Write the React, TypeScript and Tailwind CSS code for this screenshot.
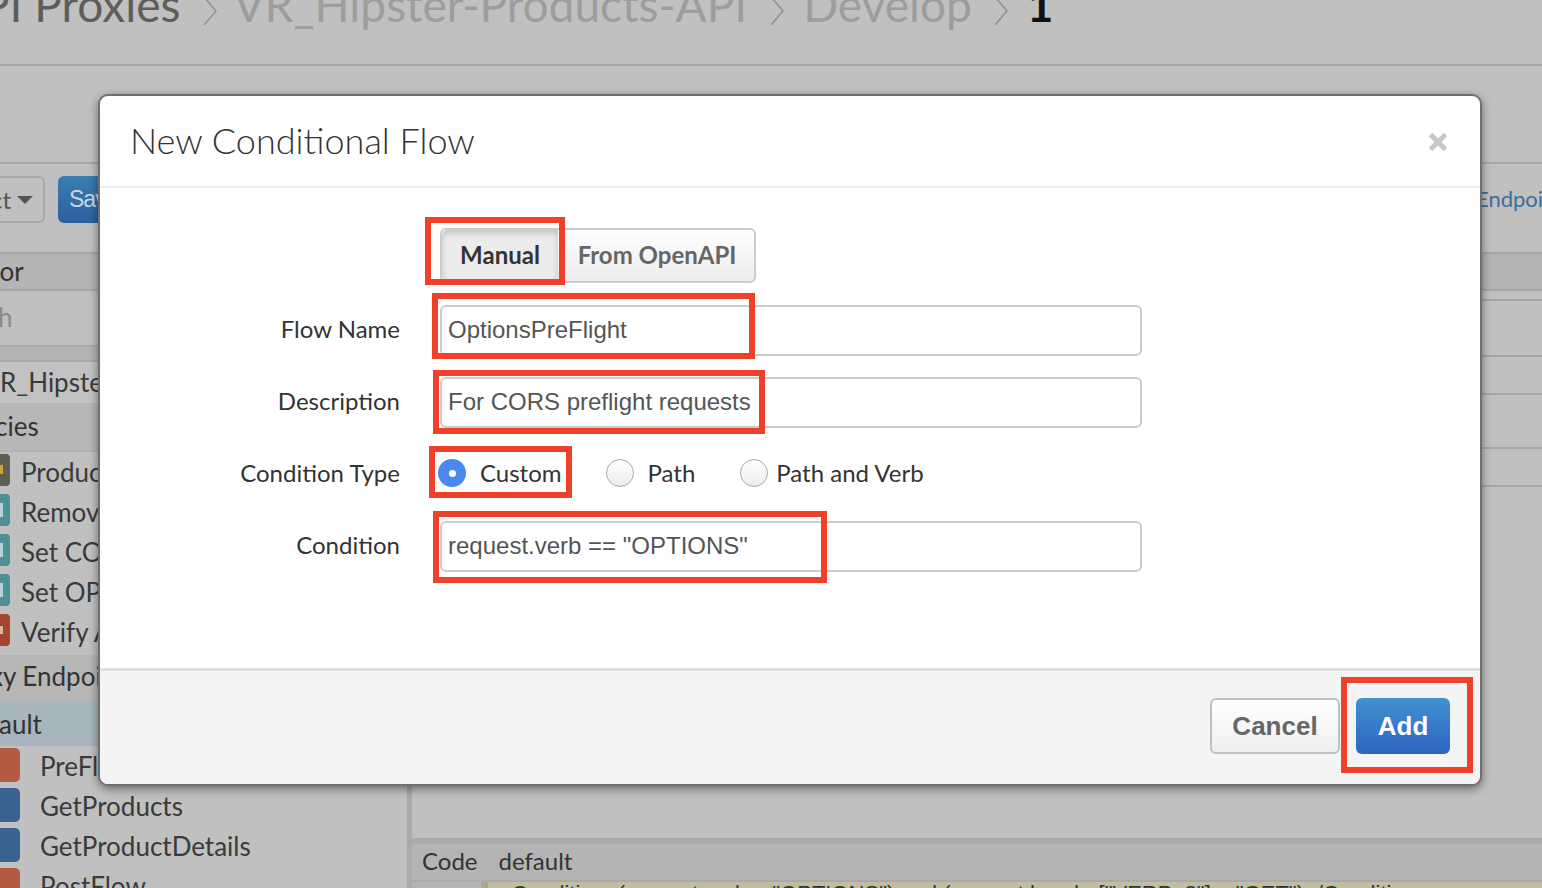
import React from "react";

const lato = "font-['Lato','Noto_Sans',sans-serif]";
const helv = "font-['Liberation_Sans',Arial,sans-serif]";

function Chevron({ className }: { className: string }) {
  return (
    <svg width="14" height="30" viewBox="0 0 14 30" className={`shrink-0 mt-[19px] ${className}`}>
      <path d="M1 1 L13 15 L1 29" fill="none" stroke="#8f8f8f" strokeWidth="1.4" />
    </svg>
  );
}

function SideRow({ color, text, mark, markH }: { color: string; text: string; mark: string; markH: string }) {
  return (
    <div className="h-10 flex items-center -ml-[10px]">
      <div className={`w-5 h-[32px] -mt-[5px] rounded-[4px] flex items-center justify-end pr-[7px] ${color}`}>
        <div className={`w-[3px] ${markH} ${mark}`} />
      </div>
      <span className="ml-[11px] text-[#3a3a3a]">{text}</span>
    </div>
  );
}

function FlowRow({ color, text }: { color: string; text: string }) {
  return (
    <div className="h-10 flex items-center">
      <div className={`w-5 h-[34px] -mt-[2px] rounded-r-[5px] ${color}`} />
      <span className="ml-5 text-[#3a3a3a]">{text}</span>
    </div>
  );
}

function Mark({ className }: { className: string }) {
  return <div className={`absolute border-[6px] border-[#ee4127] ${className}`} />;
}

function Field({ label, value }: { label: string; value: string }) {
  return (
    <div className="flex items-center h-[52px] mb-5">
      <div className={`w-[300px] text-right text-[24px] text-[#333] ${lato}`}>{label}</div>
      <div className={`ml-10 mt-[3px] w-[702px] h-[51px] border-2 border-[#cccccc] rounded-[6px] bg-white px-[6px] pb-[2px] flex items-center text-[24px] text-[#555] ${helv}`}>
        {value}
      </div>
    </div>
  );
}

function Radio({ checked }: { checked?: boolean }) {
  return checked ? (
    <div className="w-7 h-7 rounded-full bg-[#4b88ee] flex items-center justify-center">
      <div className="w-[7px] h-[7px] rounded-full bg-white" />
    </div>
  ) : (
    <div className="w-7 h-7 rounded-full border border-[#a9a9a9] bg-gradient-to-b from-white to-[#ececec]" />
  );
}

export default function App() {
  return (
    <div className={`relative w-[1542px] h-[888px] overflow-hidden bg-[#c0c0c0] ${lato} text-[26px]`}>
      {/* Page behind the dialog */}
      <div className="h-[66px] border-b-2 border-[#a6a6a6] overflow-hidden">
        <div className="flex items-start -mt-[23px] -ml-[18px] text-[46px] leading-[56px] whitespace-nowrap">
          <span className="text-[#5d5d5d]">PI Proxies</span>
          <Chevron className="ml-[23px] mr-[16px]" />
          <span className="text-[#9d9d9d]">VR_Hipster-Products-API</span>
          <Chevron className="ml-[23px] mr-[19px]" />
          <span className="text-[#9d9d9d]">Develop</span>
          <Chevron className="ml-[22px] mr-[19px]" />
          <span className="text-[#111] font-bold">1</span>
        </div>
      </div>
      <div className="h-[96px]" />
      <div className="h-[90px] border-t-2 border-[#a6a6a6] flex items-start justify-between pt-[12px]">
        <div className="flex items-center gap-[13px]">
          <div className="w-[45px] h-[47px] border-2 border-l-0 border-[#a9a9a9] rounded-r-[6px] flex items-center justify-end pr-[10px] gap-[6px] text-[24px] text-[#555] overflow-hidden">
            <span>ct</span>
            <span className="w-0 h-0 border-x-[8px] border-x-transparent border-t-[8px] border-t-[#555] shrink-0" />
          </div>
          <div className={`w-20 h-[47px] rounded-[6px] bg-gradient-to-b from-[#3a7eb0] to-[#2c5f9e] text-[#c9d6e2] pl-[11px] flex items-center text-[23px] tracking-[-1px] ${helv}`}>
            Save
          </div>
        </div>
        <div className="w-[66px] overflow-hidden whitespace-nowrap text-[22px] leading-[46px] text-[#3a6f9a]">Endpoints</div>
      </div>
      <div className="flex h-[636px]">
        <div className="w-[407px] shrink-0 overflow-hidden">
          <div className="h-[39px] border-y-2 border-[#a6a6a6] bg-[#b4b4b4] flex items-center -ml-[45px] text-[#333]">Editor</div>
          <div className="h-[54px] pb-[2px] flex items-center -ml-[2px] text-[#8a8a8a]">h</div>
          <div className="h-[17px] border-y-2 border-[#a9a9a9] bg-[#b4b4b4]" />
          <div className="h-[41px] bg-[#c2c2c2] flex items-center text-[#3a3a3a]">R_Hipster</div>
          <div className="h-[49px] border-b-2 border-[#b0b0b0] bg-[#b7b7b7] flex items-center -ml-[5px] text-[#333]">cies</div>
          <SideRow color="bg-[#5d5d52]" text="Product" mark="bg-[#c2a83a]" markH="h-[9px]" />
          <SideRow color="bg-[#4f8f96]" text="Remove" mark="bg-[#b7d3d6]" markH="h-[14px]" />
          <SideRow color="bg-[#4f8f96]" text="Set CORS" mark="bg-[#b7d3d6]" markH="h-[14px]" />
          <SideRow color="bg-[#4f8f96]" text="Set OPTIONS" mark="bg-[#b7d3d6]" markH="h-[14px]" />
          <SideRow color="bg-[#a8452d]" text="Verify API" mark="bg-[#d9b5a8]" markH="h-[8px]" />
          <div className="h-[46px] mt-[3px] pb-[3px] bg-[#b7b7b7] flex items-center -ml-[10px] text-[#333]">xy Endpoints</div>
          <div className="h-[45px] pt-[2px] bg-[#a7b5bf] flex items-center -ml-[1px] text-[#333]">ault</div>
          <FlowRow color="bg-[#b35b42]" text="PreFlow" />
          <FlowRow color="bg-[#38628f]" text="GetProducts" />
          <FlowRow color="bg-[#38628f]" text="GetProductDetails" />
          <FlowRow color="bg-[#b35b42]" text="PostFlow" />
        </div>
        <div className="w-[5px] shrink-0 bg-[#aaaaaa]" />
        <div className="flex-1 min-w-0 flex flex-col">
          <div className="h-[39px] shrink-0 border-y-2 border-[#a6a6a6] bg-[#b4b4b4]" />
          <div className="h-[8px] shrink-0" />
          <div className="h-[56px] shrink-0 border-t-2 border-[#a6a6a6]" />
          <div className="h-[38px] shrink-0 border-t-2 border-[#a6a6a6]" />
          <div className="h-[54px] shrink-0 border-t-2 border-[#a6a6a6]" />
          <div className="h-[38px] shrink-0 border-t-2 border-[#a6a6a6]" />
          <div className="h-[353px] shrink-0 border-t-2 border-[#a6a6a6]" />
          <div className="h-[6px] shrink-0 bg-[#aaaaaa]" />
          <div className="h-[36px] shrink-0 pb-[2px] bg-[#b4b4b4] flex items-center pl-[10px] gap-[21px] text-[24px] text-[#333]">
            <span>Code</span>
            <span>default</span>
          </div>
          <div className="flex-1 min-h-0 flex border-t-2 border-[#aaaaaa]">
            <div className="w-[69px] bg-[#b4b4b4]" />
            <div className="w-[7px] bg-[#a9a68c]" />
            <div className={`flex-1 bg-[#c1bda0] overflow-hidden whitespace-nowrap text-[22px] leading-[20px] text-[#333] pl-[11px] pt-[2px] ${helv}`}>
              &lt;Condition&gt;(request.verb = "OPTIONS") and (request.header["VERB_2"] = "GET")&lt;/Condition&gt;
            </div>
          </div>
        </div>
      </div>

      {/* Dialog */}
      <div className="absolute left-[98px] top-[94px] w-[1384px] h-[692px] bg-white border-2 border-[#6f6f6f] rounded-[10px] shadow-[0_3px_10px_rgba(0,0,0,0.45)] flex flex-col overflow-hidden">
        <div className="h-[92px] shrink-0 border-b-2 border-[#eeeeee] flex items-center justify-between pl-[30px] pr-[32px] pb-[3px]">
          <h3 className="text-[36px] font-light text-[#333]">New Conditional Flow</h3>
          <svg width="20" height="20" viewBox="0 0 20 20" className="mt-[4px]">
            <path d="M2.5 2.5 L17.5 17.5 M17.5 2.5 L2.5 17.5" stroke="#c8c8c8" strokeWidth="5" />
          </svg>
        </div>
        <div className="flex-1 min-h-0 pt-[40px]">
          <div className="ml-[340px] mb-5 flex h-[55px] w-[316px] border-2 border-[#cccccc] rounded-[6px] bg-gradient-to-b from-white to-[#ececec] text-[24px] font-bold">
            <div className="w-[116px] pb-[2px] flex items-center justify-center rounded-l-[6px] bg-[#ececec] shadow-[inset_0_3px_6px_rgba(0,0,0,0.18)] text-[#333]">Manual</div>
            <div className="flex-1 pb-[2px] pl-[2px] flex items-center justify-center text-[#666]">From OpenAPI</div>
          </div>
          <Field label="Flow Name" value="OptionsPreFlight" />
          <Field label="Description" value="For CORS preflight requests" />
          <div className="flex items-center h-[52px] mb-5">
            <div className="w-[300px] text-right text-[24px] text-[#333]">Condition Type</div>
            <div className="ml-[38px] flex items-center text-[24px] text-[#333]">
              <Radio checked />
              <span className="ml-[14px]">Custom</span>
              <span className="ml-[44px]"><Radio /></span>
              <span className="ml-[14px]">Path</span>
              <span className="ml-[45px]"><Radio /></span>
              <span className="ml-[8px]">Path and Verb</span>
            </div>
          </div>
          <Field label="Condition" value={'request.verb == "OPTIONS"'} />
        </div>
        <div className="h-[116px] shrink-0 border-t-[3px] border-[#e0e0e0] bg-[#f4f4f4] flex items-center justify-end gap-[16px] pr-[30px] pb-[3px] text-[26px] font-bold">
          <div className={`w-[130px] h-[56px] border-2 border-[#bcc1c4] rounded-[6px] bg-gradient-to-b from-white to-[#efefef] flex items-center justify-center text-[#666] ${helv}`}>Cancel</div>
          <div className={`w-[94px] h-[56px] rounded-[6px] bg-gradient-to-b from-[#4292cf] to-[#2f63c2] flex items-center justify-center text-white ${helv}`}>Add</div>
        </div>
      </div>

      {/* Red annotation boxes */}
      <Mark className="left-[425px] top-[217px] w-[140px] h-[68px]" />
      <Mark className="left-[432px] top-[293px] w-[323px] h-[66px]" />
      <Mark className="left-[433px] top-[370px] w-[332px] h-[64px]" />
      <Mark className="left-[429px] top-[446px] w-[143px] h-[52px]" />
      <Mark className="left-[433px] top-[511px] w-[394px] h-[72px]" />
      <Mark className="left-[1341px] top-[677px] w-[132px] h-[96px]" />
    </div>
  );
}
